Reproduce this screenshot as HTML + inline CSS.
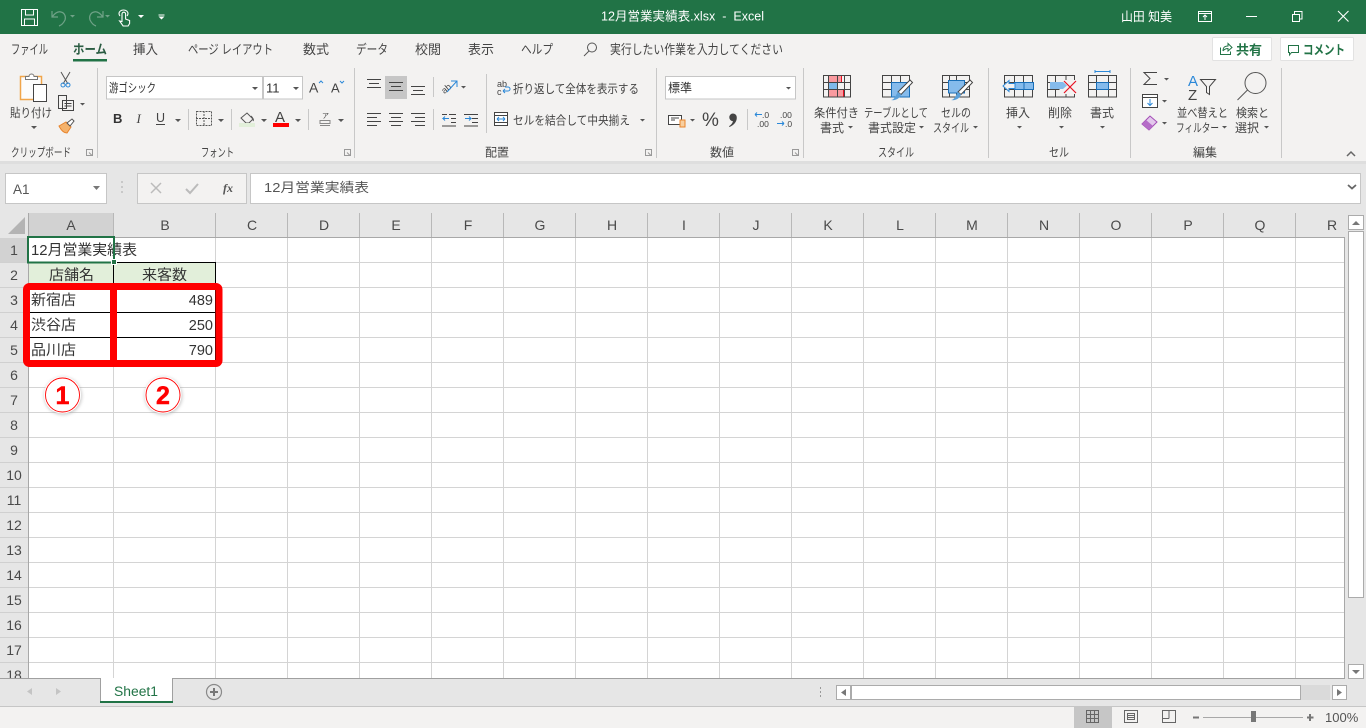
<!DOCTYPE html>
<html lang="ja"><head><meta charset="utf-8"><title>12月営業実績表.xlsx - Excel</title>
<style>
html,body{margin:0;padding:0;background:#fff;overflow:hidden}
svg{display:block}
text{font-family:"Liberation Sans","Noto Sans CJK JP",sans-serif;fill:#444;font-size:12px}
.w{fill:#fff}.r{font-size:12px}.t{font-size:13px}.g{font-size:12px}.h{font-size:14px;fill:#4a4a4a;text-anchor:middle}.c{font-size:14.5px;fill:#333}
.n{fill:none;stroke:#444;stroke-width:1}
</style></head><body>
<svg width="1366" height="728" viewBox="0 0 1366 728" xmlns="http://www.w3.org/2000/svg">
<defs><filter id="b" x="-30%" y="-30%" width="160%" height="160%"><feGaussianBlur stdDeviation="1.500"/></filter></defs>
<rect width="1366" height="728" fill="#fff"/>
<!-- title bar -->
<rect width="1366" height="34" fill="#217346"/>
<path d="M21.500 9.500h16v16h-16zM25.500 9.500v5.500h8v-5.500M24.500 25.500v-6.500h10v6.500" fill="none" stroke="#fff"/>
<path d="M52 11v6h6M52 17c3-4 6-6 9-5 4 1 5 5 4 8-1 2-3 5-6 6" fill="none" stroke="#6fa287" stroke-width="1.200"/>
<path d="M103 11v6h-6M103 17c-3-4-6-6-9-5-4 1-5 5-4 8 1 2 3 5 6 6" fill="none" stroke="#6fa287" stroke-width="1.200"/>
<path d="M70 15h5l-2.500 2.500zM105 15h5l-2.500 2.500z" fill="#6fa287"/>
<path d="M122 19v-5a1.800 1.800 0 0 1 3.600 0v5l4 1.500v3l-1.500 2.500h-5l-3.500-5 2.400 .5zM120 16a3.600 3.600 0 0 1-1-2.500c0-2 2-3.500 4.500-3.500s4.500 1.500 4.500 3.500c0 1-.4 1.800-1 2.500" fill="none" stroke="#fff" stroke-width="1.100"/>
<path d="M138 15h6l-3 3zM158.500 14.500h6v1h-6zM158.500 16.500h6l-3 3z" fill="#fff"/>
<text x="601" y="20.500" class="w" textLength="163" lengthAdjust="spacingAndGlyphs" style="font-size:12.500px">12月営業実績表.xlsx&#160;&#160;-&#160;&#160;Excel</text>
<text x="1121" y="21" class="w" textLength="51" lengthAdjust="spacingAndGlyphs" style="font-size:12.500px">山田 知美</text>
<path d="M1198.500 11.500h13v10h-13zM1198.500 13.500h13M1205 20v-5M1203 17l2-2 2 2" fill="none" stroke="#fff"/>
<path d="M1246 16.500h11" stroke="#fff" fill="none"/>
<path d="M1292.500 14.500h7v7h-7zM1294.500 14v-2.500h7.500v7.500h-2.500" fill="none" stroke="#fff"/>
<path d="M1338 11l10.500 10.500M1348.500 11l-10.500 10.500" stroke="#fff" fill="none" stroke-width="1.100"/>
<!-- ribbon -->
<rect y="34" width="1366" height="127" fill="#f3f2f1"/>
<rect y="161" width="1366" height="52" fill="#e6e6e6"/>
<rect y="161" width="1366" height="3" fill="#dedede"/>
<g>
<text class="t" x="11" y="54" textLength="37" lengthAdjust="spacingAndGlyphs">ファイル</text>
<text class="t" x="73" y="54" textLength="34" lengthAdjust="spacingAndGlyphs" style="font-weight:bold;fill:#2a5c42">ホーム</text>
<rect x="73" y="59" width="34" height="2.500" fill="#217346"/>
<text class="t" x="133" y="54" textLength="25" lengthAdjust="spacingAndGlyphs">挿入</text>
<text class="t" x="188" y="54" textLength="85" lengthAdjust="spacingAndGlyphs">ページ レイアウト</text>
<text class="t" x="303" y="54" textLength="26" lengthAdjust="spacingAndGlyphs">数式</text>
<text class="t" x="356" y="54" textLength="32" lengthAdjust="spacingAndGlyphs">データ</text>
<text class="t" x="415" y="54" textLength="26" lengthAdjust="spacingAndGlyphs">校閲</text>
<text class="t" x="468" y="54" textLength="26" lengthAdjust="spacingAndGlyphs">表示</text>
<text class="t" x="521" y="54" textLength="32" lengthAdjust="spacingAndGlyphs">ヘルプ</text>
<circle cx="592" cy="47.500" r="4.500" fill="none" stroke="#555"/><path d="M589 51l-5 5" stroke="#555" fill="none"/>
<text class="t" x="610" y="54" textLength="173" lengthAdjust="spacingAndGlyphs">実行したい作業を入力してください</text>
</g>
<!-- share / comment -->
<rect x="1212.500" y="37.500" width="59" height="23" rx="1" fill="#fff" stroke="#e2e2e2"/>
<path d="M1220.500 47.500v7h10v-3M1223 51c0-4 2-5 5-5v-2.500l4 4-4 3.500v-2.500c-2 0-3.500 .5-5 2.500" fill="none" stroke="#217346"/>
<text x="1236" y="54.500" textLength="26" lengthAdjust="spacingAndGlyphs" style="font-weight:bold;fill:#217346;font-size:13px">共有</text>
<rect x="1280.500" y="37.500" width="73" height="23" rx="1" fill="#fff" stroke="#e2e2e2"/>
<path d="M1288.500 45.500h10v7h-7l-2 2.500v-2.500h-1z" fill="none" stroke="#217346"/>
<text x="1303" y="54.500" textLength="42" lengthAdjust="spacingAndGlyphs" style="font-weight:bold;fill:#217346;font-size:13px">コメント</text>
<!-- group separators -->
<path d="M97.500 68v90M354.500 68v90M656.500 68v90M803.500 68v90M988.500 68v90M1130.500 68v90M1281.500 68v90M486.500 74v59M188.500 109v21M231.500 109v21M308.500 109v21M433.500 77v20M433.500 109v21M747.500 109v21" stroke="#c8c8c8" fill="none"/>
<!-- clipboard -->
<path d="M20.500 76.500h21v23h-21z" fill="#fcfcfc" stroke="#f0a54a" stroke-width="1.500"/>
<path d="M25.500 79.500v-3h3.500a2.500 2.500 0 0 1 5 0h3.500v3z" fill="#fff" stroke="#777"/>
<path d="M33.500 84.500h13v17h-13z" fill="#fff" stroke="#444"/>
<text x="10" y="117" class="r" textLength="42" lengthAdjust="spacingAndGlyphs">貼り付け</text>
<path d="M61 72l7 12M70 72l-7 12" stroke="#555" fill="none"/>
<circle cx="63" cy="85" r="2" fill="none" stroke="#2b88d8"/><circle cx="68" cy="85" r="2" fill="none" stroke="#2b88d8"/>
<path d="M58.500 95.500h8v13h-8zM62.500 100.500h11v10h-11zM64.500 103.500h7M64.500 106h7" fill="#f3f2f1" stroke="#444"/>
<path d="M59 126l7-4 5 5-4 6c-3 0-6-3-8-7z" fill="#f5b26b" stroke="#e8842c"/>
<path d="M67 123l5-4 2 2-4 5z" fill="#fff" stroke="#555"/>
<text x="11" y="156.500" class="g" textLength="60" lengthAdjust="spacingAndGlyphs">クリップボード</text>
<path d="M86.500 149.500h6v6h-6zM89 152.500l3 3" fill="none" stroke="#999"/>
<!-- font -->
<rect x="106.500" y="76.500" width="156" height="22.500" fill="#fff" stroke="#c6c6c6"/>
<rect x="263.500" y="76.500" width="39" height="22.500" fill="#fff" stroke="#c6c6c6"/>
<text x="109" y="92" class="r" textLength="47" lengthAdjust="spacingAndGlyphs" style="fill:#333">游ゴシック</text>
<text x="266" y="92.500" style="font-size:13px;fill:#333">11</text>
<text x="309" y="92.500" style="font-size:14px">A</text><path d="M319 83l2-2 2 2" stroke="#2b88d8" fill="none"/>
<text x="331" y="92.500" style="font-size:13px">A</text><path d="M340 81l2 2 2-2" stroke="#2b88d8" fill="none"/>
<text x="113" y="123" style="font-size:13px;font-weight:bold;fill:#333">B</text>
<text x="136.500" y="123" style="font-size:13px;font-family:'Liberation Serif',serif;font-style:italic;fill:#444">I</text>
<text x="156" y="122" style="font-size:12.500px;fill:#444">U</text><path d="M156 124.500h9" stroke="#444"/>
<path d="M196.500 111.500h15v14h-15zM204 111v14M196 118.500h16" fill="none" stroke="#555" stroke-dasharray="2 1"/>
<path d="M241 118l6-5 6 6-4 4h-3zM251 116c2 2 3 4 2 5" fill="none" stroke="#555"/>
<rect x="239" y="123" width="16" height="4" fill="#e2efda"/>
<text x="275" y="122" style="font-size:15px;fill:#444">A</text><rect x="273" y="123" width="16" height="4" fill="#f00"/>
<text x="322" y="118" style="font-size:7px">ア</text><path d="M320 120.500h10v3h-10zM320 125.500h10" fill="none" stroke="#888"/>
<text x="201" y="156.500" class="g" textLength="33" lengthAdjust="spacingAndGlyphs">フォント</text>
<path d="M344.500 149.500h6v6h-6zM347 152.500l3 3" fill="none" stroke="#999"/>
<!-- alignment -->
<rect x="385" y="76" width="22" height="23" fill="#c6c6c6"/>
<path d="M367 79.500h14M369 83.500h10M367 87.500h14M389 82.500h14M391 86.500h10M389 90.500h14M411 86.500h14M413 90.500h10M411 94.500h14" stroke="#444" fill="none"/>
<path d="M367 113.500h14M367 117.500h10M367 121.500h14M367 125.500h10M389 113.500h14M391 117.500h10M389 121.500h14M391 125.500h10M411 113.500h14M415 117.500h10M411 121.500h14M415 125.500h10" stroke="#444" fill="none"/>
<path d="M449 114.500h7M451 118.500h5M451 122.500h5M442 126h14M464 114.500h14M472 118.500h6M472 122.500h6M464 126h14M442 114.500h5" stroke="#444" fill="none"/>
<path d="M449 118.500h-6l2-2m-2 2l2 2M465 118.500h6l-2-2m2 2l-2 2" stroke="#2b88d8" fill="none"/>
<text x="441" y="91" transform="rotate(-40 447 88)" style="font-size:9px">ab</text>
<path d="M447 92l10-11M451 81h6v6" stroke="#2b88d8" fill="none"/>
<text x="497" y="87" style="font-size:9px">ab</text><text x="497" y="95" style="font-size:9px">c</text>
<path d="M503 91h5a2 2 0 0 0 0-4h-3M503 91l2-2m-2 2l2 2" stroke="#2b88d8" fill="none"/>
<text x="513" y="93" class="r" textLength="126" lengthAdjust="spacingAndGlyphs">折り返して全体を表示する</text>
<path d="M494.500 112.500h13v13h-13zM494.500 115.500h13M494.500 122.500h13" fill="#fff" stroke="#444"/>
<path d="M497 119h8M497 119l2-2m-2 2l2 2M505 119l-2-2m2 2l-2 2" stroke="#2b88d8" fill="none"/>
<text x="513" y="124.500" class="r" textLength="117" lengthAdjust="spacingAndGlyphs">セルを結合して中央揃え</text>
<text x="485" y="156.500" class="g" textLength="24" lengthAdjust="spacingAndGlyphs">配置</text>
<path d="M645.500 149.500h6v6h-6zM648 152.500l3 3" fill="none" stroke="#999"/>
<!-- number -->
<rect x="665.500" y="76.500" width="130" height="22.500" fill="#fff" stroke="#c6c6c6"/>
<text x="668" y="92" class="r" textLength="24" lengthAdjust="spacingAndGlyphs" style="fill:#333">標準</text>
<path d="M668.500 115.500h13v9h-13zM671 118h8M671 120h4" fill="#fff" stroke="#444"/>
<path d="M680 120h5v7h-5z" fill="#f8cfa0" stroke="#e8842c"/>
<text x="702" y="126" style="font-size:19px;fill:#444">%</text>
<path d="M733 113.500a3.800 3.800 0 0 1 3.800 4.200c0 4-3 7.500-7.300 9.300l-.5-.8c2.200-1.500 3.600-3.300 4-5a3.700 3.700 0 0 1-3.700-3.900 3.700 3.700 0 0 1 3.700-3.800z" fill="#444"/>
<text x="762" y="118" style="font-size:8.500px">.0</text><text x="757" y="127" style="font-size:8.500px">.00</text>
<path d="M762 114.500h-7m0 0l2-2m-2 2l2 2M777 123.500h7m0 0l-2-2m2 2l-2 2" stroke="#2b88d8" fill="none"/>
<text x="780" y="118" style="font-size:8.500px">.00</text><text x="785" y="127" style="font-size:8.500px">.0</text>
<text x="710" y="156.500" class="g" textLength="24" lengthAdjust="spacingAndGlyphs">数値</text>
<path d="M792.500 149.500h6v6h-6zM795 152.500l3 3" fill="none" stroke="#999"/>
<!-- styles -->
<path d="M828.500 75.500h13v7h-13zM828.500 89.500h15v7.500h-15z" fill="#fa9a9f" stroke="#e81123"/>
<rect x="829" y="83" width="8" height="6" fill="#7fbaea"/>
<path d="M823.500 75.500h27v21.500h-27zM823.500 82.500h27M823.500 89.500h27M828.500 75.500v21.500M837.500 75.500v21.500M844.500 75.500v21.500" fill="none" stroke="#444"/>
<path d="M882.500 75.500h27v21.500h-27zM882.500 82.500h27M882.500 89.500h27M891.500 75.500v21.500M900.500 75.500v21.500" fill="none" stroke="#444"/>
<path d="M891.500 82.500h18v14.500h-18z" fill="#85bbec" stroke="#1a6fb8"/>
<path d="M898 92l12-12 2.500 2.500-11.500 12z" fill="#fff" stroke="#444"/>
<path d="M891 100c4 0 5-6 7-8l3 2.500c-1 4-6 6.500-10 5.500z" fill="#5a9fd8"/>
<path d="M942.500 75.500h27v21.500h-27zM942.500 82.500h27M942.500 89.500h27M949.500 75.500v21.500M956.500 75.500v21.500" fill="none" stroke="#444"/>
<path d="M948.500 80.500h16v12.500h-16z" fill="#85bbec" stroke="#1a6fb8"/>
<path d="M958 92l12-12 2.500 2.500-11.500 12z" fill="#fff" stroke="#444"/>
<path d="M951 100c4 0 5-6 7-8l3 2.500c-1 4-6 6.500-10 5.500z" fill="#5a9fd8"/>
<text x="814" y="117" class="r" textLength="45" lengthAdjust="spacingAndGlyphs">条件付き</text>
<text x="820" y="132" class="r" textLength="24" lengthAdjust="spacingAndGlyphs">書式</text>
<text x="864" y="117" class="r" textLength="64" lengthAdjust="spacingAndGlyphs">テーブルとして</text>
<text x="868" y="132" class="r" textLength="48" lengthAdjust="spacingAndGlyphs">書式設定</text>
<text x="941" y="117" class="r" textLength="30" lengthAdjust="spacingAndGlyphs">セルの</text>
<text x="933" y="132" class="r" textLength="36" lengthAdjust="spacingAndGlyphs">スタイル</text>
<text x="878" y="156.500" class="g" textLength="36" lengthAdjust="spacingAndGlyphs">スタイル</text>
<!-- cells -->
<path d="M1004.500 75.500h28v21.500h-28zM1004.500 82.500h28M1004.500 89.500h28M1014.500 75.500v21.500M1023.500 75.500v21.500" fill="none" stroke="#444"/>
<path d="M1014.500 82.500h19v7h-19zM1024 82.500v7" fill="#85bbec" stroke="#1a6fb8"/>
<path d="M1015 83.500h-6v-3l-6 5.500 6 5.500v-3h6z" fill="#f3f2f1" stroke="#2b88d8"/>
<path d="M1047.500 75.500h27v21.500h-27z" fill="none" stroke="#444"/>
<path d="M1047.500 82.500h12M1047.500 89.500h12M1055.500 75.500v7M1055.500 89.500v7M1066 75.500v7M1066 89.500v7" fill="none" stroke="#444"/>
<rect x="1063" y="80" width="13" height="14" fill="#f3f2f1"/>
<path d="M1050 82h13l4 3.500-4 3.500h-13z" fill="#85bbec"/>
<path d="M1064 81l12 12M1076 81l-12 12" stroke="#e81123" stroke-width="1.200" fill="none"/>
<path d="M1088.500 75.500h28v21.500h-28zM1088.500 82.500h28M1088.500 89.500h28M1096.500 75.500v21.500M1108.500 75.500v21.500" fill="none" stroke="#444"/>
<rect x="1096.500" y="82.500" width="12" height="7" fill="#85bbec" stroke="#1a6fb8"/>
<path d="M1095 71.500h15M1095 70v3M1110 70v3" stroke="#2b88d8" fill="none"/>
<text x="1006" y="117" class="r" textLength="24" lengthAdjust="spacingAndGlyphs">挿入</text>
<text x="1048" y="117" class="r" textLength="24" lengthAdjust="spacingAndGlyphs">削除</text>
<text x="1090" y="117" class="r" textLength="24" lengthAdjust="spacingAndGlyphs">書式</text>
<text x="1049" y="156.500" class="g" textLength="20" lengthAdjust="spacingAndGlyphs">セル</text>
<!-- editing -->
<path d="M1157 72.500h-13l6 6-6 6h13" fill="none" stroke="#444"/>
<path d="M1142.500 94.500h15v13h-15zM1142.500 97.500h15" fill="#fff" stroke="#444"/>
<path d="M1150 99v6M1147.500 103l2.500 2.500 2.500-2.500" stroke="#2b88d8" fill="none"/>
<path d="M1142 124l8-8 7 6-8 8z" fill="#e3c8ec" stroke="#a24bb5"/><path d="M1142 124l4-4 7 6-4 4z" fill="#b56cc8"/>
<text x="1188" y="86" style="font-size:15px;fill:#2b88d8">A</text><text x="1188" y="100" style="font-size:15px">Z</text>
<path d="M1200.500 79.500h15l-6 7v8l-3-2v-6z" fill="none" stroke="#444"/>
<circle cx="1255.500" cy="83" r="10.500" fill="none" stroke="#555"/><path d="M1247.500 90l-10 10" stroke="#555" fill="none"/>
<text x="1177" y="117" class="r" textLength="51" lengthAdjust="spacingAndGlyphs">並べ替えと</text>
<text x="1176" y="132" class="r" textLength="43" lengthAdjust="spacingAndGlyphs">フィルター</text>
<text x="1236" y="117" class="r" textLength="33" lengthAdjust="spacingAndGlyphs">検索と</text>
<text x="1235" y="132" class="r" textLength="24" lengthAdjust="spacingAndGlyphs">選択</text>
<text x="1193" y="156.500" class="g" textLength="24" lengthAdjust="spacingAndGlyphs">編集</text>
<path d="M1347 156l4-4 4 4" fill="none" stroke="#666" stroke-width="1.500"/>
<!-- carets -->
<path fill="#555" d="M31 126h6l-3 3zM80 103h5l-2.500 2.500zM252 87h6l-3 3zM293 87h6l-3 3zM175 119h6l-3 3zM218 119h6l-3 3zM261 119h6l-3 3zM295 119h6l-3 3zM338 119h6l-3 3zM461 86h5l-2.500 2.500zM640 119h5l-2.500 2.500zM786 87h5l-2.500 2.500zM690 119h5l-2.500 2.500zM848 126h5l-2.500 2.500zM919 126h5l-2.500 2.500zM973 126h5l-2.500 2.500zM1017 126h5l-2.500 2.500zM1059 126h5l-2.500 2.500zM1100 126h5l-2.500 2.500zM1164 78h5l-2.500 2.500zM1162 100h5l-2.500 2.500zM1162 122h5l-2.500 2.500zM1222 126h5l-2.500 2.500zM1264 126h5l-2.500 2.500z"/>
<!-- formula bar -->
<rect x="5.500" y="173.500" width="101" height="30" fill="#fff" stroke="#c6c6c6"/>
<text x="13" y="194" style="font-size:13.500px;fill:#555">A1</text>
<path d="M93 186h7l-3.500 4z" fill="#777"/>
<path d="M122 181v2M122 186v2M122 191v2" stroke="#aaa" fill="none"/>
<rect x="137.500" y="173.500" width="109" height="30" fill="#f3f2f1" stroke="#c6c6c6"/>
<path d="M151 183l10 10M161 183l-10 10" stroke="#bbb" stroke-width="1.500" fill="none"/>
<path d="M186 189l4 4 8-9" stroke="#bbb" stroke-width="2" fill="none"/>
<text x="223" y="192" style="font-size:12px;font-style:italic;font-weight:bold;font-family:'Liberation Serif',serif;fill:#555">fx</text>
<rect x="250.500" y="173.500" width="1110" height="30" fill="#fff" stroke="#c6c6c6"/>
<text x="264" y="192" textLength="105" lengthAdjust="spacingAndGlyphs" style="font-size:13px;fill:#555">12月営業実績表</text>
<path d="M1348 185l4 3.500 4-3.500" fill="none" stroke="#666" stroke-width="1.800"/>
<!-- headers -->
<rect y="213" width="1345" height="25" fill="#e6e6e6"/>
<rect y="238" width="29" height="440" fill="#e6e6e6"/>
<rect x="29" y="213" width="84" height="24" fill="#d2d2d2"/>
<rect y="238" width="28" height="24" fill="#d2d2d2"/>
<path d="M25 217v17h-17z" fill="#b4b4b4"/>
<path d="M113.500 213v24M215.500 213v24M287.500 213v24M359.500 213v24M431.500 213v24M503.500 213v24M575.500 213v24M647.500 213v24M719.500 213v24M791.500 213v24M863.500 213v24M935.500 213v24M1007.500 213v24M1079.500 213v24M1151.500 213v24M1223.500 213v24M1295.500 213v24" stroke="#b8b8b8" fill="none"/>
<path d="M0 262.500h28M0 287.500h28M0 312.500h28M0 337.500h28M0 362.500h28M0 387.500h28M0 412.500h28M0 437.500h28M0 462.500h28M0 487.500h28M0 512.500h28M0 537.500h28M0 562.500h28M0 587.500h28M0 612.500h28M0 637.500h28M0 662.500h28" stroke="#d0d0d0" fill="none"/>
<path d="M29 262.500H1344M29 287.500H1344M29 312.500H1344M29 337.500H1344M29 362.500H1344M29 387.500H1344M29 412.500H1344M29 437.500H1344M29 462.500H1344M29 487.500H1344M29 512.500H1344M29 537.500H1344M29 562.500H1344M29 587.500H1344M29 612.500H1344M29 637.500H1344M29 662.500H1344M113.500 238V678M215.500 238V678M287.500 238V678M359.500 238V678M431.500 238V678M503.500 238V678M575.500 238V678M647.500 238V678M719.500 238V678M791.500 238V678M863.500 238V678M935.500 238V678M1007.500 238V678M1079.500 238V678M1151.500 238V678M1223.500 238V678M1295.500 238V678" stroke="#d4d4d4" fill="none"/>
<path d="M28.500 213V678M28 237.500H1344.500V678" stroke="#a8a8a8" fill="none"/>
<text class="h" x="71" y="230">A</text><text class="h" x="165" y="230">B</text><text class="h" x="252" y="230">C</text><text class="h" x="324" y="230">D</text><text class="h" x="396" y="230">E</text><text class="h" x="468" y="230">F</text><text class="h" x="540" y="230">G</text><text class="h" x="612" y="230">H</text><text class="h" x="684" y="230">I</text><text class="h" x="756" y="230">J</text><text class="h" x="828" y="230">K</text><text class="h" x="900" y="230">L</text><text class="h" x="972" y="230">M</text><text class="h" x="1044" y="230">N</text><text class="h" x="1116" y="230">O</text><text class="h" x="1188" y="230">P</text><text class="h" x="1260" y="230">Q</text><text class="h" x="1332" y="230">R</text>
<text class="h" x="14" y="255">1</text><text class="h" x="14" y="280">2</text><text class="h" x="14" y="305">3</text><text class="h" x="14" y="330">4</text><text class="h" x="14" y="355">5</text><text class="h" x="14" y="380">6</text><text class="h" x="14" y="405">7</text><text class="h" x="14" y="430">8</text><text class="h" x="14" y="455">9</text><text class="h" x="14" y="480">10</text><text class="h" x="14" y="505">11</text><text class="h" x="14" y="530">12</text><text class="h" x="14" y="555">13</text><text class="h" x="14" y="580">14</text><text class="h" x="14" y="605">15</text><text class="h" x="14" y="630">16</text><text class="h" x="14" y="655">17</text><text class="h" x="14" y="680">18</text>
<!-- cells -->
<rect x="29" y="263" width="186" height="24" fill="#e2efda"/>
<path d="M29 287.500H216M29 312.500H216M29 337.500H216M29 362.500H216M113.500 263V363M215.500 262V363M113.500 262.500H216" stroke="#000" fill="none"/>
<text class="c" x="31" y="255" textLength="106" lengthAdjust="spacingAndGlyphs">12月営業実績表</text>
<text class="c" x="49" y="280" textLength="45" lengthAdjust="spacingAndGlyphs">店舗名</text>
<text class="c" x="142" y="280" textLength="45" lengthAdjust="spacingAndGlyphs">来客数</text>
<text class="c" x="31" y="305" textLength="45" lengthAdjust="spacingAndGlyphs">新宿店</text>
<text class="c" x="31" y="330" textLength="45" lengthAdjust="spacingAndGlyphs">渋谷店</text>
<text class="c" x="31" y="355" textLength="45" lengthAdjust="spacingAndGlyphs">品川店</text>
<text class="c" x="213" y="305" text-anchor="end">489</text>
<text class="c" x="213" y="330" text-anchor="end">250</text>
<text class="c" x="213" y="355" text-anchor="end">790</text>
<rect x="28" y="237" width="86" height="25.500" fill="none" stroke="#217346" stroke-width="2"/>
<rect x="111.500" y="259.500" width="5" height="5" fill="#217346" stroke="#fff"/>
<!-- annotations -->
<rect x="26.500" y="286.500" width="192.500" height="77" rx="3" fill="none" stroke="#f00" stroke-width="7"/>
<rect x="110" y="287" width="7" height="76" fill="#f00"/>
<circle cx="63" cy="396" r="19" fill="#9a9a9a" opacity=".5" filter="url(#b)"/><circle cx="62.500" cy="395" r="18.500" fill="#fff"/>
<circle cx="62.500" cy="395" r="17" fill="none" stroke="#f00" stroke-width=".9"/>
<text x="62.500" y="404" text-anchor="middle" style="font-size:25px;font-weight:bold;fill:#f00;stroke:#f00;stroke-width:.5">1</text>
<circle cx="163.500" cy="396" r="19" fill="#9a9a9a" opacity=".5" filter="url(#b)"/><circle cx="163" cy="395" r="18.500" fill="#fff"/>
<circle cx="163" cy="395" r="17" fill="none" stroke="#f00" stroke-width=".9"/>
<text x="163" y="404" text-anchor="middle" style="font-size:25px;font-weight:bold;fill:#f00;stroke:#f00;stroke-width:.5">2</text>
<!-- vertical scroll -->
<rect x="1345" y="213" width="21" height="494" fill="#e6e6e6"/>
<rect x="1348.500" y="215.500" width="15" height="14" fill="#fff" stroke="#ababab"/>
<path d="M1352 225l4-4 4 4z" fill="#777"/>
<rect x="1348.500" y="231.500" width="15" height="366" fill="#fff" stroke="#ababab"/>
<rect x="1348.500" y="664.500" width="15" height="14" fill="#fff" stroke="#ababab"/>
<path d="M1352 670l4 4 4-4z" fill="#777"/>
<!-- sheet tabs -->
<rect y="678" width="1345" height="29" fill="#e6e6e6"/>
<path d="M0 678.500H100M172 678.500H1345" stroke="#a0a0a0" fill="none"/>
<rect x="100" y="678" width="73" height="25" fill="#fff"/>
<path d="M100.500 678v24M172.500 678v24" stroke="#a0a0a0" fill="none"/>
<rect x="100" y="701" width="73" height="2" fill="#217346"/>
<text x="114" y="696" textLength="44" lengthAdjust="spacingAndGlyphs" style="font-size:13.500px;fill:#217346">Sheet1</text>
<path d="M32 688v7l-5-3.500zM56 688v7l5-3.500z" fill="#c4c4c4"/>
<circle cx="214" cy="692" r="7.500" fill="none" stroke="#8a8a8a" stroke-width="1.200"/>
<path d="M214 688v8M210 692h8" stroke="#777" stroke-width="2" fill="none"/>
<path d="M820.500 687v2M820.500 691v2M820.500 695v2" stroke="#999" fill="none"/>
<!-- horizontal scroll -->
<rect x="836.500" y="685.500" width="14" height="14" fill="#fff" stroke="#ababab"/>
<path d="M846 689v7l-5-3.500z" fill="#777"/>
<rect x="851.500" y="685.500" width="449" height="14" fill="#fff" stroke="#ababab"/>
<rect x="1301" y="685" width="29" height="15" fill="#dadada"/>
<rect x="1332.500" y="685.500" width="14" height="14" fill="#fff" stroke="#ababab"/>
<path d="M1337 689v7l5-3.500z" fill="#777"/>
<!-- status bar -->
<rect y="706" width="1366" height="22" fill="#f3f2f1"/>
<path d="M0 706.500H1366" stroke="#c6c6c6" fill="none"/>
<rect x="1074" y="706" width="38" height="22" fill="#c6c6c6"/>
<path d="M1086.500 710.500h12v12h-12zM1086.500 714.500h12M1086.500 718.500h12M1090.500 710.500v12M1094.500 710.500v12" fill="none" stroke="#666"/>
<path d="M1124.500 710.500h13v12h-13zM1127.500 713.500h7v6h-7zM1128 715.500h6M1128 717.500h6" fill="none" stroke="#666"/>
<path d="M1162.500 710.500h13v12h-13zM1162.500 718.500h6.500M1169 710.500v8" fill="none" stroke="#666"/>
<path d="M1193 717.500h6M1307 717.500h6.500M1310 714v7" stroke="#777" stroke-width="2" fill="none"/>
<path d="M1203 717.500h100" stroke="#a8a8a8" fill="none"/>
<rect x="1251" y="711" width="5" height="11" fill="#777"/>
<text x="1325" y="722" style="font-size:13px;fill:#555">100%</text>
</svg>
</body></html>
